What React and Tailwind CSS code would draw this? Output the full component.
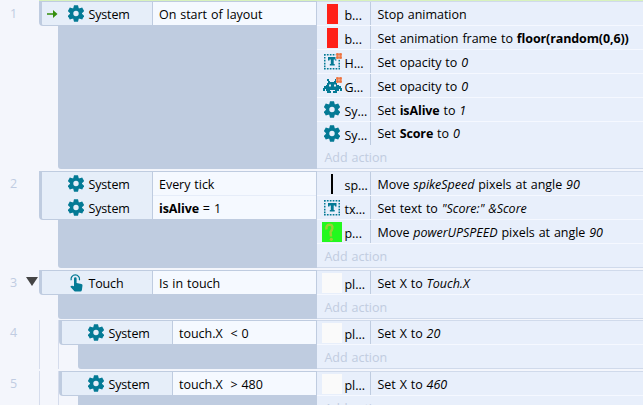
import React from "react";

const TEAL = "#047a95";

function Gear() {
  return (
    <svg width="16" height="17" viewBox="-8 -8.500 16 17" className="block">
      <g fill={TEAL}>
        <path d="M-2 -8.300h4l.8 3.300h-5.600z" />
        <path d="M-2 -8.300h4l.8 3.300h-5.600z" transform="rotate(60)" />
        <path d="M-2 -8.300h4l.8 3.300h-5.600z" transform="rotate(120)" />
        <path d="M-2 -8.300h4l.8 3.300h-5.600z" transform="rotate(180)" />
        <path d="M-2 -8.300h4l.8 3.300h-5.600z" transform="rotate(240)" />
        <path d="M-2 -8.300h4l.8 3.300h-5.600z" transform="rotate(300)" />
      </g>
      <circle r="4.400" fill="none" stroke={TEAL} strokeWidth="3.400" />
    </svg>
  );
}

function Touch() {
  return (
    <svg width="13" height="18" viewBox="0 0 13 18" className="block">
      <path d="M1.300 6.300A4.200 4.200 0 1 1 9.300 6.300" fill="none" stroke={TEAL} strokeWidth="1.200" />
      <path
        fill={TEAL}
        d="M4 4.500a1.300 1.300 0 0 1 2.600 0V9l4.800.9q1.200.3 1.100 1.500l-.6 4.600q-.3 1.600-1.600 1.600H5.600q-.8 0-1.400-.6L.3 12.700l.8-.8q.5-.4 1.100-.2l1.800.6z"
      />
    </svg>
  );
}

function Hash() {
  return (
    <g fill="#ee6a30">
      <path d="M13.500 0h2v6h-2zM16.500 0h2v6h-2z" opacity="0.75" />
      <path d="M13 .500h6v2h-6zM13 3.500h6v2h-6z" opacity="0.75" />
    </g>
  );
}

function TextIcon({ hash }) {
  return (
    <svg width="19" height="17" viewBox="0 0 19 17" className="block">
      <path
        d="M1 1.750h16M1 15.750h16M1.750 1v15.500M16.250 1v15.500"
        fill="none"
        stroke={TEAL}
        strokeWidth="1.500"
        strokeDasharray="1.700 1.200"
      />
      <path fill={TEAL} d="M5 4h8.500v3.500h-1.500V6.500h-1.300v4.500h1V12.500H6.800V11h1V6.500H6.500v1H5z" />
      {hash && <path fill="#e9effb" d="M12.500 0H19v6.500h-6.500z" />}
      {hash && <Hash />}
    </svg>
  );
}

function Invader() {
  return (
    <svg width="19" height="17" viewBox="0 0 19 17" className="block">
      <path
        fill={TEAL}
        fillRule="evenodd"
        d="M4 2h2v2h1v1h4V4h1V2h1v4h1v2h2v1h2v2h1v3h-2v-2h-1v2h-2v2h-4v-2h2v-1H7v1h1v2H4v-2H3v-2H2v2H0v-3h1V9h2V8h1V6h1V4H4zM6 7.500v2h2v-2zM11 7.500v2h2v-2z"
      />
      <Hash />
    </svg>
  );
}

function Question() {
  return (
    <svg width="20" height="20" viewBox="0 0 20 20" className="block">
      <path fill="#23f81e" d="M0 0h20v20H0z" />
      <path d="M4.500 7.500Q3.800 3 7.300 2.700Q11 2.600 10.300 6.500Q9.800 8.500 8.600 10L9 14.500" fill="none" stroke="#9bcf36" strokeWidth="2.500" />
      <circle cx="9.300" cy="17.300" r="1.600" fill="#9bcf36" />
    </svg>
  );
}

const ICONS = {
  gear: <Gear />,
  touch: <Touch />,
  red: <span className="block h-5 w-[11px] bg-[#ff2018]" />,
  bar: <span className="block h-5 w-[2px] bg-black" />,
  blank: <span className="block size-5 bg-[#fafafa]" />,
  textHash: <TextIcon hash />,
  text: <TextIcon />,
  invader: <Invader />,
  question: <Question />,
};

function Condition({ icon, name, arrow, divided, children }) {
  return (
    <div className="flex h-6">
      <div className="flex h-6 w-[110px] shrink-0 items-center bg-[#e6eef9]">
        <span className="flex w-[25px] shrink-0 justify-center pr-[5px]">
          {arrow && (
            <svg width="11" height="8" viewBox="0 0 11 8">
              <path fill="#358f0d" d="M0 3.200h6V0l4.500 4L6 8V4.800H0z" />
            </svg>
          )}
        </span>
        <span className="flex w-[18px] shrink-0 justify-center pb-px">{ICONS[icon]}</span>
        <span className="pt-[2px] pl-[3.500px] tracking-[-0.15px]">{name}</span>
      </div>
      <div
        className={
          "flex h-6 min-w-0 flex-1 items-center border-l border-[#bfcce0] bg-[#f5f9ff] pt-[2px] pl-[6px] " +
          (divided ? "shadow-[inset_0_-1px_0_#e6edf9]" : "")
        }
      >
        <span>{children}</span>
      </div>
    </div>
  );
}

function Action({ icon, name, joined, children }) {
  return (
    <div className={"flex " + (joined ? "h-[23px]" : "h-6 border-b border-[#f5f8ff]")}>
      <div className="flex w-[54px] shrink-0 items-center border-r border-[#bfcce0]">
        <span className="flex w-[27.5px] shrink-0 justify-center pl-[2.500px]">{ICONS[icon]}</span>
        <span className="pt-1">{name}</span>
      </div>
      <div className={joined ? "pt-[3px] pl-[6.500px]" : "pt-1 pl-[6.500px]"}>{children}</div>
    </div>
  );
}

function EventBlock({ number, expanded, nested, height, conditions, children }) {
  return (
    <div className={"flex shrink-0 " + height}>
      <div className="flex w-[39px] shrink-0 pt-1">
        <span className="w-[26px] pl-[10px] text-[#c0cce2]">{number}</span>
        {expanded && (
          <svg width="12" height="9" viewBox="0 0 12 9" className="mt-[3px]">
            <path fill="#454545" d="M0 0h12L6 9z" />
          </svg>
        )}
      </div>
      {nested && <div className="w-5 shrink-0 border-x border-[#d5dcec]" />}
      <div className="flex min-w-0 flex-1">
        <div className={"flex shrink-0 flex-col " + (nested ? "w-[258px]" : "w-[278px]")}>
          <div className="z-10 shrink-0 overflow-hidden rounded-bl-[4px] border-y border-r border-l-[3px] border-[#bfcce0]">
            <div className="-mb-px">{conditions}</div>
          </div>
          <div className="ml-[19px] flex-1 rounded-bl-[3px] bg-[#bfcce0]" />
        </div>
        <div className="min-w-0 flex-1 border-y border-[#d0daeb] bg-[#e8effb]">
          {children}
          <div className="pt-1 pl-[7.500px] text-[#c1cce0]">Add action</div>
        </div>
      </div>
    </div>
  );
}

export default function App() {
  return (
    <div className="flex h-[405px] w-[643px] flex-col overflow-hidden bg-[#f4f6fc] font-['Open_Sans','Noto_Sans',sans-serif] text-[12.5px] leading-[18px] tracking-[-0.03px] whitespace-pre text-black [word-spacing:0.7px] [&_b]:tracking-[-0.12px]">
      <div className="ml-[39px] h-px shrink-0 bg-[#d8f2bd]" />
      <div className="flex flex-col">
        <EventBlock
          number="1"
          height="h-[168px] mb-[2px]"
          conditions={<Condition icon="gear" name="System" arrow>On start of layout</Condition>}
        >
          <Action icon="red" name="b...">Stop animation</Action>
          <Action icon="red" name="b...">Set animation frame to <b>floor(random(0,6))</b></Action>
          <Action icon="textHash" name="H...">Set opacity to <i>0</i></Action>
          <Action icon="invader" name="G...">Set opacity to <i>0</i></Action>
          <Action icon="gear" name="Sy...">Set <b>isAlive</b> to <i>1</i></Action>
          <Action icon="gear" name="Sy..." joined>Set <b>Score</b> to <i>0</i></Action>
        </EventBlock>
        <EventBlock
          number="2"
          height="h-[97px] mb-[2px]"
          conditions={
            <>
              <Condition icon="gear" name="System" divided>Every tick</Condition>
              <Condition icon="gear" name="System"><b>isAlive</b> = 1</Condition>
            </>
          }
        >
          <Action icon="bar" name="sp...">Move <i>spikeSpeed</i> pixels at angle <i>90</i></Action>
          <Action icon="text" name="tx...">Set text to <i>"Score:" &amp;Score</i></Action>
          <Action icon="question" name="p...">Move <i>powerUPSPEED</i> pixels at angle <i>90</i></Action>
        </EventBlock>
        <EventBlock
          number="3"
          expanded
          height="h-[49px] mb-[1px]"
          conditions={<Condition icon="touch" name="Touch">Is in touch</Condition>}
        >
          <Action icon="blank" name="pl...">Set X to <i>Touch.X</i></Action>
        </EventBlock>
        <EventBlock
          number="4"
          nested
          height="h-[49px] mb-[2px]"
          conditions={<Condition icon="gear" name="System">touch.X  &lt; 0</Condition>}
        >
          <Action icon="blank" name="pl...">Set X to <i>20</i></Action>
        </EventBlock>
        <EventBlock
          number="5"
          nested
          height="h-[49px]"
          conditions={<Condition icon="gear" name="System">touch.X  &gt; 480</Condition>}
        >
          <Action icon="blank" name="pl...">Set X to <i>460</i></Action>
        </EventBlock>
      </div>
    </div>
  );
}
